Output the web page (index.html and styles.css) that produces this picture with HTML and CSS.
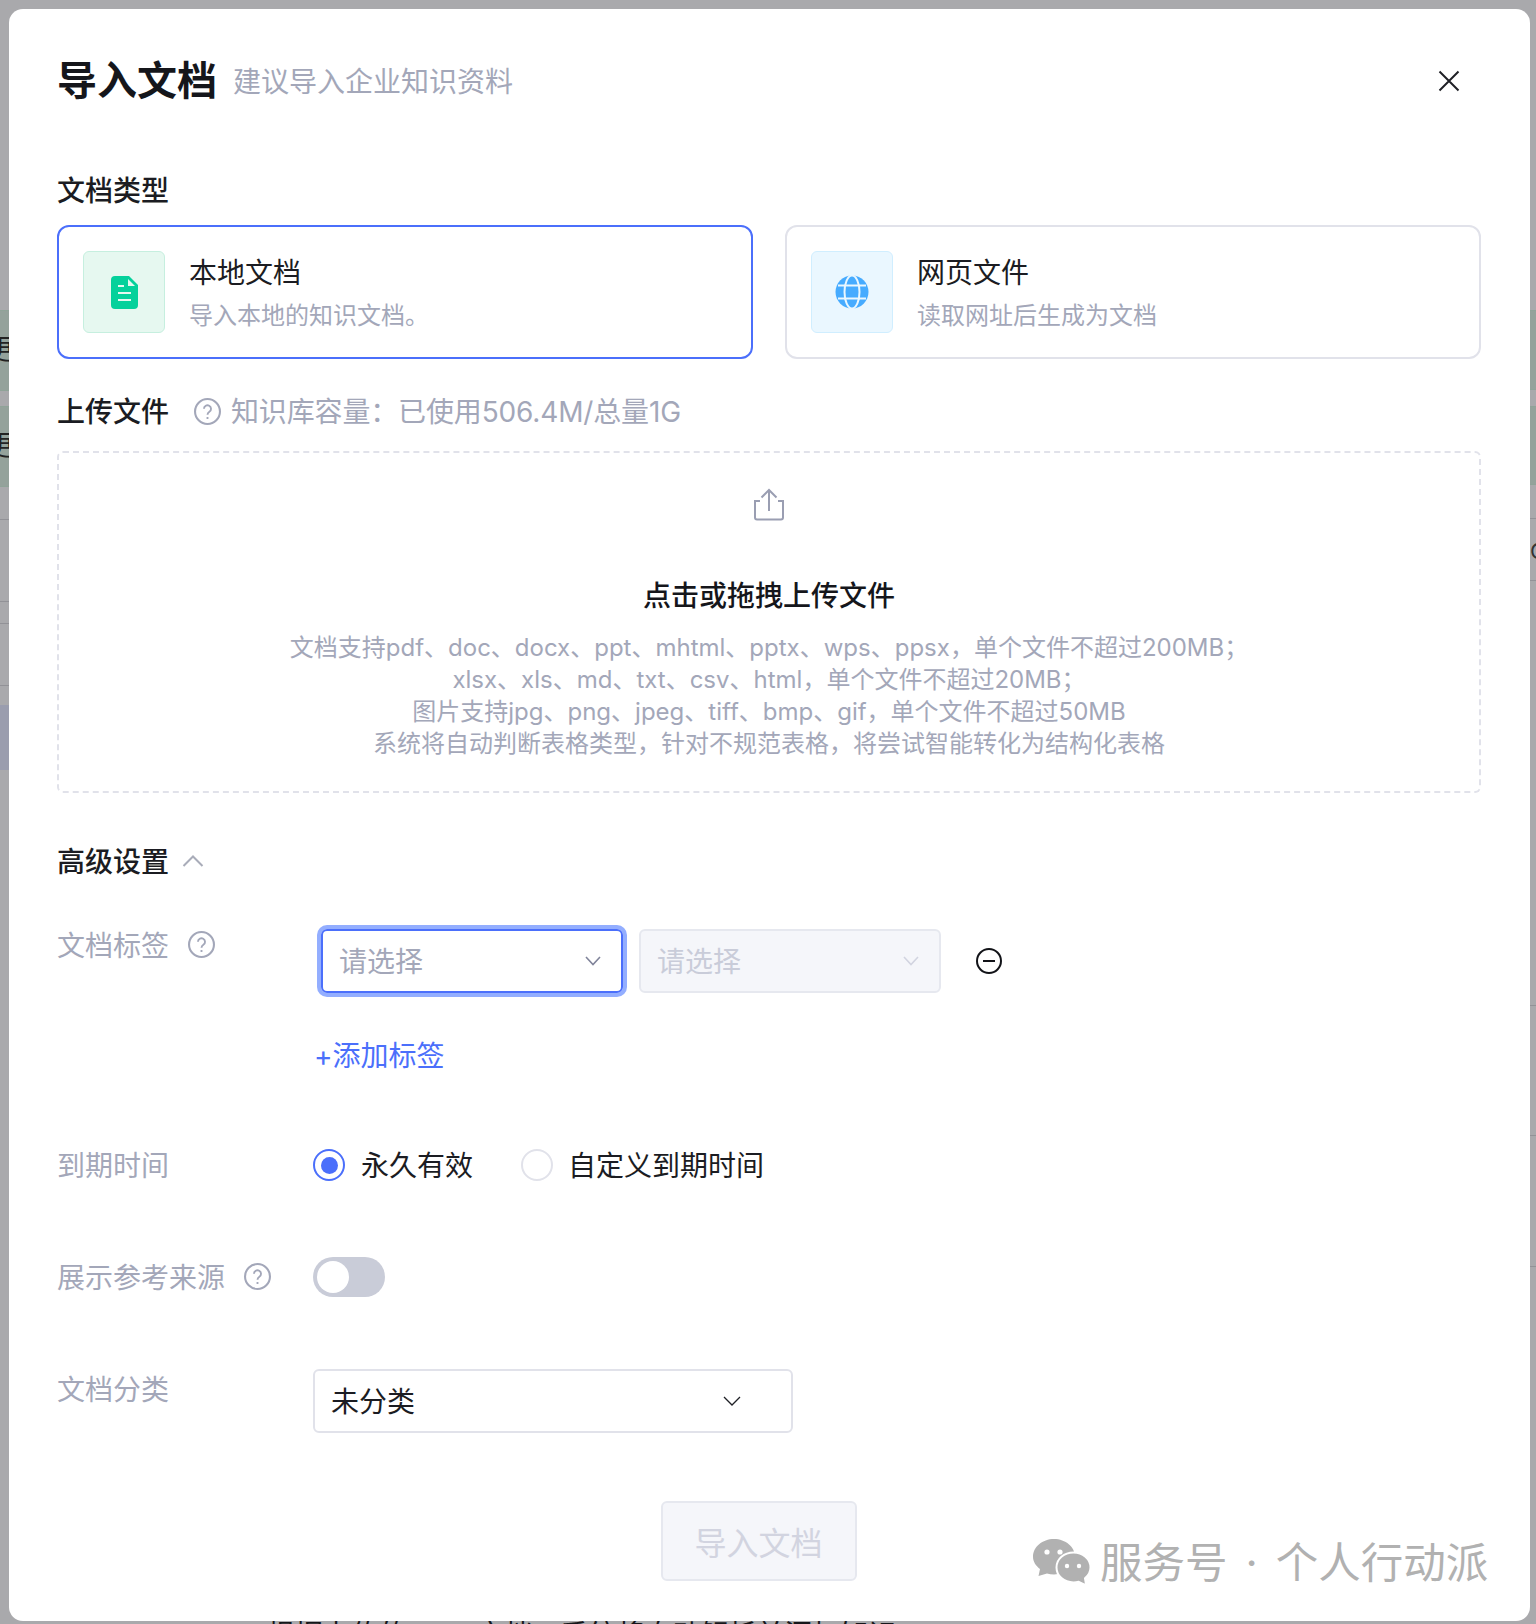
FILE: index.html
```html
<!DOCTYPE html>
<html lang="zh-CN">
<head>
  <meta charset="UTF-8" />
  <meta name="viewport" content="width=device-width, initial-scale=1.0" />
  <title>导入文档</title>
  <link rel="stylesheet" href="styles.css">
</head>
<body>
  <!-- Page behind the dimmed backdrop, only its edges show -->
  <div class="behind">
    <div class="bg-row bg-green"><span class="bg-char">更</span></div>
    <div class="bg-row bg-green bg-second"><span class="bg-char">更</span></div>
    <div class="bg-row bg-plain"></div>
    <div class="bg-row bg-plain bg-tall"></div>
    <div class="bg-row bg-plain bg-short"></div>
    <div class="bg-row bg-plain bg-mid"></div>
    <div class="bg-row bg-blue"></div>
    <div class="bg-text">根据上传的2024文档，系统将自动解析并添加知识</div>
  </div>
  <div class="behind-right">
    <div class="side-green"></div>
    <div class="side-green side-second"></div>
    <div class="side-line side-a"></div>
    <span class="side-char">C</span>
    <div class="side-line side-b"></div>
    <div class="side-line side-c"></div>
    <div class="side-line side-d"></div>
    <div class="side-line side-e"></div>
  </div>

  <!-- Modal -->
  <div class="modal">
    <div class="modal-header">
      <h1 class="modal-title">导入文档</h1>
      <span class="modal-sub">建议导入企业知识资料</span>
      <svg class="close-icon" viewBox="0 0 22 22" fill="none" stroke="#1f2026" stroke-width="2">
        <path d="M1.5 1.5l19 19M20.5 1.5l-19 19"/>
      </svg>
    </div>

    <div class="section-label section-type">文档类型</div>
    <div class="type-cards">
      <div class="type-card active">
        <div class="type-icon icon-green">
          <svg width="27" height="33" viewBox="0 0 27 33">
            <path d="M4 0h14l9 9v20a4 4 0 0 1-4 4H4a4 4 0 0 1-4-4V4a4 4 0 0 1 4-4z" fill="#04d19b"/>
            <path d="M17 3l7 7h-7z" fill="#e6f8f0"/>
            <path d="M7 10h6M7 17h13M7 24h13" stroke="#e6f8f0" stroke-width="2.2"/>
          </svg>
        </div>
        <div class="type-text">
          <div class="type-name">本地文档</div>
          <div class="type-desc">导入本地的知识文档。</div>
        </div>
      </div>
      <div class="type-card">
        <div class="type-icon icon-blue">
          <svg width="34" height="34" viewBox="0 0 34 34">
            <circle cx="17" cy="17" r="16.5" fill="#46abff"/>
            <g fill="none" stroke="#eaf7ff" stroke-width="2">
              <ellipse cx="17" cy="17" rx="7.5" ry="16.5"/>
              <path d="M3 10.5h28M3 23.5h28"/>
            </g>
          </svg>
        </div>
        <div class="type-text">
          <div class="type-name">网页文件</div>
          <div class="type-desc">读取网址后生成为文档</div>
        </div>
      </div>
    </div>

    <div class="upload-head">
      <span class="section-label">上传文件</span>
      <svg class="help-icon" viewBox="0 0 26 26" fill="none" stroke="#a3a7b9" stroke-width="2">
        <circle cx="13" cy="13" r="12"/>
        <path d="M9.6 10.4a3.4 3.4 0 1 1 5.2 2.9c-1.2.8-1.8 1.3-1.8 2.9M13 18.2v2" stroke-width="1.8"/>
      </svg>
      <span class="upload-quota">知识库容量：已使用506.4M/总量1G</span>
    </div>

    <div class="dropzone">
      <svg class="upload-icon" width="32" height="33" viewBox="0 0 32 33" fill="none" stroke="#9a9eb2" stroke-width="2">
        <path d="M7 13H2v16.500a2 2 0 0 0 2 2h24a2 2 0 0 0 2-2V13h-5"/>
        <path d="M16 23V2M8.500 9.500L16 2l7.500 7.500"/>
      </svg>
      <div class="drop-title">点击或拖拽上传文件</div>
      <div class="drop-desc">
        <div>文档支持pdf、doc、docx、ppt、mhtml、pptx、wps、ppsx，单个文件不超过200MB；</div>
        <div>xlsx、xls、md、txt、csv、html，单个文件不超过20MB；</div>
        <div>图片支持jpg、png、jpeg、tiff、bmp、gif，单个文件不超过50MB</div>
        <div>系统将自动判断表格类型，针对不规范表格，将尝试智能转化为结构化表格</div>
      </div>
    </div>

    <div class="advanced">
      <span class="section-label">高级设置</span>
      <svg class="advanced-arrow" width="22" height="12" viewBox="0 0 22 12" fill="none" stroke="#a9acb9" stroke-width="2">
        <path d="M1.500 11L11 1.500l9.500 9.500"/>
      </svg>
    </div>

    <div class="form-row row-tags">
      <div class="form-label">文档标签
        <svg class="help-icon" viewBox="0 0 26 26" fill="none" stroke="#a3a7b9" stroke-width="2">
          <circle cx="13" cy="13" r="12"/>
          <path d="M9.6 10.4a3.4 3.4 0 1 1 5.2 2.9c-1.2.8-1.800 1.300-1.800 2.900M13 18.200v2" stroke-width="1.800"/>
        </svg>
      </div>
      <div class="form-control">
        <div class="tag-selects">
          <div class="select focused">
            <span class="placeholder">请选择</span>
            <svg class="chevron" viewBox="0 0 16 10" fill="none" stroke="#80849a" stroke-width="1.600"><path d="M1 1l7 7.500L15 1"/></svg>
          </div>
          <div class="select disabled">
            <span class="placeholder">请选择</span>
            <svg class="chevron" viewBox="0 0 16 10" fill="none" stroke="#d2d4e0" stroke-width="1.600"><path d="M1 1l7 7.500L15 1"/></svg>
          </div>
          <svg class="minus-icon" viewBox="0 0 26 26" fill="none" stroke="#121318" stroke-width="2">
            <circle cx="13" cy="13" r="12"/>
            <path d="M7 13h12"/>
          </svg>
        </div>
        <div class="add-tag">+添加标签</div>
      </div>
    </div>

    <div class="form-row row-expire">
      <div class="form-label">到期时间</div>
      <div class="form-control radios">
        <span class="radio checked"></span>
        <span class="radio-text">永久有效</span>
        <span class="radio"></span>
        <span class="radio-text">自定义到期时间</span>
      </div>
    </div>

    <div class="form-row row-source">
      <div class="form-label">展示参考来源
        <svg class="help-icon" viewBox="0 0 26 26" fill="none" stroke="#a3a7b9" stroke-width="2">
          <circle cx="13" cy="13" r="12"/>
          <path d="M9.6 10.4a3.4 3.4 0 1 1 5.2 2.9c-1.2.8-1.800 1.300-1.800 2.900M13 18.200v2" stroke-width="1.800"/>
        </svg>
      </div>
      <div class="form-control">
        <div class="toggle"><span class="toggle-knob"></span></div>
      </div>
    </div>

    <div class="form-row row-category">
      <div class="form-label">文档分类</div>
      <div class="form-control">
        <div class="select category">
          <span>未分类</span>
          <svg class="chevron" viewBox="0 0 18 10" fill="none" stroke="#1f2026" stroke-width="1.300"><path d="M1 1l8 8 8-8"/></svg>
        </div>
      </div>
    </div>

    <div class="modal-footer">
      <button class="submit-btn">导入文档</button>
    </div>

    <!-- WeChat watermark on top of the screenshot -->
    <div class="watermark">
      <svg width="58" height="48" viewBox="0 0 58 48">
        <path d="M21 0c11.600 0 21 7.900 21 17.800 0 9.800-9.400 17.700-21 17.700-2.500 0-4.800-.4-7-1L5.500 37l1.500-7C2.700 26.700 0 22.500 0 17.800 0 7.900 9.400 0 21 0z" fill="#b1b1b1"/>
        <path d="M40.500 13.500C49.600 13.500 57.500 20 57.500 28.500c0 4.300-2.200 8.100-5.500 10.800l1.200 7.200-7.600-3.700c-1.600.4-3.300.6-5.100.6-9.500 0-17-6.500-17-14.900 0-8.500 7.500-15 17-15z" fill="#b1b1b1" stroke="#fff" stroke-width="2"/>
        <circle cx="14" cy="13" r="2.600" fill="#fff"/>
        <circle cx="27" cy="13" r="2.600" fill="#fff"/>
        <circle cx="34" cy="27" r="2.200" fill="#fff"/>
        <circle cx="46" cy="27" r="2.200" fill="#fff"/>
      </svg>
      <span>服务号 · 个人行动派</span>
    </div>
  </div>
</body>
</html>
```
FILE: styles.css
```css
/* Global Reset & Base Styles */
* {
  margin: 0;
  padding: 0;
  box-sizing: border-box;
}
html, body {
  height: 1624px;
  overflow: hidden;
}
body {
  position: relative;
  background: #a9a9ac;
  font-family: Inter, "Noto Sans CJK SC", sans-serif;
  color: #1b1c22;
}
/* Page behind the backdrop */
.behind {
  position: absolute;
  inset: 0;
  padding-top: 310px;
}
.bg-row {
  position: relative;
  width: 9px;
  border-top: 1px solid #8fa398;
  border-bottom: 1px solid #8fa398;
}
.bg-green {
  height: 81px;
  background: #94a29b;
  overflow: hidden;
}
.bg-second {
  margin-top: 15px;
}
.bg-char {
  position: absolute;
  left: -14px;
  top: 23px;
  font-size: 28px;
  line-height: 32px;
  color: #222;
}
.bg-plain {
  height: 1px;
  border-top: none;
  border-bottom: 1px solid #929297;
  margin-top: 32px;
}
.bg-tall {
  margin-top: 81px;
}
.bg-short {
  margin-top: 21px;
}
.bg-mid {
  margin-top: 61px;
}
.bg-blue {
  height: 65px;
  margin-top: 19px;
  background: #9a9dae;
  border: none;
}
.bg-text {
  position: absolute;
  left: 267px;
  top: 1617px;
  font-size: 28px;
  line-height: 36px;
  color: #15161a;
  white-space: nowrap;
}
.behind-right {
  position: absolute;
  top: 310px;
  right: 0;
  width: 6px;
}
.side-green {
  height: 80px;
  background: #94a29b;
  border-top: 1px solid #8fa398;
  border-bottom: 1px solid #8fa398;
}
.side-second {
  margin-top: 16px;
  height: 79px;
}
.side-line {
  height: 1px;
  background: #929297;
}
.side-a {
  margin-top: 33px;
}
.side-char {
  display: block;
  height: 61px;
  padding-top: 20px;
  font-size: 22px;
  line-height: 24px;
  overflow: hidden;
  color: #333;
}
.side-b {
  margin-top: 0;
}
.side-c {
  margin-top: 424px;
}
.side-d {
  margin-top: 129px;
}
.side-e {
  margin-top: 130px;
}
/* Modal */
.modal {
  position: absolute;
  left: 9px;
  top: 9px;
  width: 1521px;
  height: 1612px;
  padding: 44px 49px 0 48px;
  background: #fff;
  border-radius: 14px;
}
.modal-header {
  display: flex;
  align-items: center;
  height: 56px;
}
.modal-title {
  font-size: 40px;
  line-height: 56px;
  font-weight: 700;
  color: #15161b;
}
.modal-sub {
  margin-left: 16px;
  padding-bottom: 2px;
  font-size: 28px;
  color: #a3a7b9;
}
.close-icon {
  width: 22px;
  height: 22px;
  margin-left: auto;
  margin-right: 21px;
}
.section-label {
  padding-top: 2px;
  font-size: 28px;
  line-height: 40px;
  font-weight: 500;
  color: #1b1c22;
}
.section-type {
  margin-top: 60px;
}
/* Document type cards */
.type-cards {
  display: grid;
  grid-template-columns: 696px 696px;
  gap: 32px;
  margin-top: 14px;
}
.type-card {
  display: flex;
  align-items: center;
  height: 134px;
  padding: 0 24px;
  border: 2.5px solid #e1e2ea;
  border-radius: 12px;
}
.type-card.active {
  border-color: #4b6ffb;
}
.type-icon {
  display: flex;
  align-items: center;
  justify-content: center;
  width: 82px;
  height: 82px;
  border-radius: 6px;
}
.icon-green {
  background: #e6f8f0;
  border: 1px solid #c6efdf;
}
.icon-blue {
  background: #eaf7ff;
  border: 1px solid #d0eeff;
}
.type-text {
  margin-left: 24px;
  padding-top: 2px;
}
.type-name {
  font-size: 28px;
  line-height: 36px;
}
.type-desc {
  margin-top: 9px;
  font-size: 24px;
  line-height: 32px;
  color: #a3a7b9;
}
/* Upload */
.upload-head {
  display: flex;
  align-items: center;
  height: 40px;
  margin-top: 32px;
}
.help-icon {
  width: 27px;
  height: 27px;
  flex: none;
}
.upload-head .help-icon {
  margin-left: 25px;
}
.upload-quota {
  margin-left: 10px;
  padding-bottom: 2px;
  font-size: 28px;
  letter-spacing: -0.15px;
  color: #a3a7b9;
}
.dropzone {
  display: flex;
  flex-direction: column;
  align-items: center;
  height: 342px;
  margin-top: 20px;
  padding-top: 35px;
  border: 2px dashed #e1e2ea;
  border-radius: 6px;
}
.drop-title {
  margin-top: 55px;
  font-size: 28px;
  line-height: 40px;
  font-weight: 500;
  color: #15161b;
}
.drop-desc {
  margin-top: 16px;
  font-size: 24px;
  line-height: 32px;
  text-align: center;
  color: #a3a7b9;
}
/* Advanced settings */
.advanced {
  display: flex;
  align-items: center;
  height: 40px;
  margin-top: 48px;
}
.advanced-arrow {
  margin-left: 13px;
}
.form-row {
  display: flex;
}
.row-tags {
  margin-top: 44px;
}
.row-expire {
  margin-top: 69px;
}
.row-source,
.row-category {
  margin-top: 72px;
}
.form-label {
  display: flex;
  align-items: center;
  flex: none;
  width: 256px;
  height: 40px;
  padding-bottom: 2px;
  font-size: 28px;
  color: #a3a7b9;
}
.form-label .help-icon {
  margin-left: 19px;
}
.form-control {
  flex: 1;
}
.tag-selects {
  display: flex;
  align-items: center;
  padding: 4px 0 0 8px;
}
.select {
  display: flex;
  align-items: center;
  justify-content: space-between;
  width: 302px;
  height: 64px;
  padding: 0 20px 0 16px;
  border: 2px solid #e1e2ea;
  border-radius: 6px;
  font-size: 28px;
}
.select span {
  padding-bottom: 2px;
}
.select.focused {
  border-color: #4b6ffb;
  box-shadow: 0 0 0 4px #93aeff;
}
.select.disabled {
  margin-left: 16px;
  background: #f5f6fa;
  border-color: #e6e8ef;
}
.select.disabled .placeholder {
  color: #c9ccd9;
}
.placeholder {
  color: #a3a7b9;
}
.chevron {
  width: 16px;
  height: 10px;
}
.minus-icon {
  width: 26px;
  height: 26px;
  margin-left: 35px;
}
.add-tag {
  margin: 43px 0 0 1px;
  font-size: 28px;
  line-height: 40px;
  color: #4b6ffb;
}
.radios {
  display: flex;
  align-items: center;
  height: 40px;
}
.radio {
  display: flex;
  align-items: center;
  justify-content: center;
  width: 32px;
  height: 32px;
  border: 2px solid #e1e2ea;
  border-radius: 50%;
}
.radio.checked {
  border-color: #4b6ffb;
}
.radio.checked::after {
  content: "";
  width: 17px;
  height: 17px;
  border-radius: 50%;
  background: #4b6ffb;
}
.radio-text {
  margin: 0 48px 0 16px;
  padding-bottom: 2px;
  font-size: 28px;
}
.radio:not(.checked) + .radio-text {
  margin-left: 15px;
}
.toggle {
  width: 72px;
  height: 40px;
  padding: 4px;
  border-radius: 20px;
  background: #c9ccd8;
}
.toggle-knob {
  display: block;
  width: 32px;
  height: 32px;
  border-radius: 50%;
  background: #fff;
}
.select.category {
  width: 480px;
  padding: 0 50px 0 16px;
}
.select.category .chevron {
  width: 18px;
}
/* Footer */
.modal-footer {
  display: flex;
  justify-content: center;
  margin-top: 68px;
  padding-right: 21px;
}
.submit-btn {
  width: 196px;
  height: 80px;
  background: #f5f6fa;
  border: 2px solid #e6e8ef;
  border-radius: 6px;
  font-family: inherit;
  font-size: 32px;
  color: #d2d4e0;
}
.watermark {
  position: absolute;
  left: 1024px;
  top: 1529px;
  display: flex;
  align-items: center;
  gap: 9px;
  font-size: 42.5px;
  line-height: 50px;
  word-spacing: 6px;
  color: #b1b1b1;
  white-space: nowrap;
}
```
